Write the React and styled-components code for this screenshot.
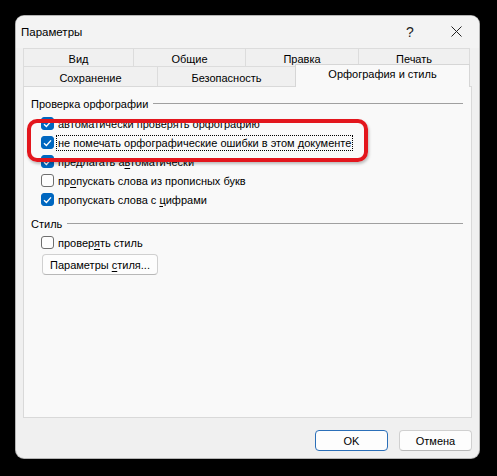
import React from "react";
import styled, { createGlobalStyle } from "styled-components";

const Global = createGlobalStyle`
  html, body {
    margin: 0;
    padding: 0;
    background: #000;
    width: 497px;
    height: 476px;
    overflow: hidden;
  }
  * { box-sizing: border-box; }
`;

const Dialog = styled.div`
  margin: 16px 0 0 16px;
  width: 463px;
  height: 442px;
  background: #f0f0f0;
  border-radius: 8px;
  box-shadow: 0 0 0 1px #b4b4b4;
  font-family: "Liberation Sans", Arial, sans-serif;
  font-size: 11px;
  color: #000;
  display: flex;
  flex-direction: column;
  overflow: hidden;
`;

const TitleBar = styled.div`
  height: 32px;
  display: flex;
  align-items: center;
  padding-left: 5px;
  padding-bottom: 1px;
  background: #f3f3f3;
`;

const Title = styled.div`
  flex: 1;
  font-size: 11.5px;
`;

const TitleButton = styled.div`
  width: 46px;
  height: 32px;
  display: flex;
  align-items: center;
  justify-content: center;
  font-size: 14px;
  color: #222;
`;

const Body = styled.div`
  padding: 0 7px;
  display: flex;
  flex-direction: column;
`;

const TabRow = styled.div`
  display: flex;
  height: ${(p) => p.$h}px;
  width: 447px;
  position: relative;
`;

const Tab = styled.div`
  width: ${(p) => p.$w}px;
  display: flex;
  align-items: center;
  justify-content: center;
  background: #f0f0f0;
  border: 1px solid #dcdcdc;
  border-bottom: none;
  margin-right: -1px;
  padding-top: ${(p) => p.$pt || 0}px;
`;

const ActiveTab = styled.div`
  width: ${(p) => p.$w}px;
  height: 23px;
  margin-top: -2px;
  display: flex;
  align-items: flex-start;
  justify-content: center;
  padding-top: 3px;
  background: #f9f9f9;
  border: 1px solid #d6d6d6;
  border-bottom: none;
  position: relative;
  z-index: 2;
`;

const Panel = styled.div`
  width: 449px;
  height: 332px;
  background: #f9f9f9;
  border: 1px solid #d9d9d9;
  position: relative;
  padding: 8px 8px 0 7px;
`;

const GroupHead = styled.div`
  display: flex;
  align-items: center;
  height: 17px;
  gap: 5px;
  margin-top: ${(p) => p.$mt || 0}px;
  &::after {
    content: "";
    flex: 1;
    height: 1px;
    background: #a0a0a0;
  }
`;

const Options = styled.div`
  display: flex;
  flex-direction: column;
  padding-left: 10px;
  margin-top: ${(p) => p.$mt || 0}px;
`;

const Row = styled.label`
  display: flex;
  align-items: center;
  height: 19px;
  gap: 3px;
`;

const Box = styled.span`
  width: 13px;
  height: 13px;
  border-radius: 3px;
  flex: none;
  display: flex;
  align-items: center;
  justify-content: center;
  background: ${(p) => (p.$on ? "#0067c0" : "#fdfdfd")};
  border: 1px solid ${(p) => (p.$on ? "#0067c0" : "#6e6e6e")};
`;

const Label = styled.span`
  padding: 0 1px;
  line-height: 14px;
  outline: ${(p) => (p.$focus ? "1px dotted #000" : "none")};
  outline-offset: 0;
  u { text-underline-offset: 2px; }
`;

const Button = styled.div`
  height: 21px;
  width: ${(p) => p.$w}px;
  display: flex;
  align-items: center;
  justify-content: center;
  background: #fdfdfd;
  border: 1px solid ${(p) => (p.$primary ? "#2b6fb8" : "#d0d0d0")};
  border-bottom-color: ${(p) => (p.$primary ? "#2b6fb8" : "#b8b8b8")};
  border-radius: 4px;
  u { text-underline-offset: 2px; }
`;

const StyleButton = styled(Button)`
  margin: 2px 0 0 1px;
`;

const Footer = styled.div`
  display: flex;
  justify-content: flex-end;
  gap: 11px;
  padding: 12px 0 0 0;
`;

const Highlight = styled.div`
  position: absolute;
  left: 3px;
  top: 32px;
  width: 341px;
  height: 43px;
  border: 4px solid #e3161d;
  border-radius: 10px;
  box-shadow: 1px 2px 3px rgba(0, 0, 0, 0.25);
  pointer-events: none;
`;

const Check = () => (
  <svg width="9" height="8" viewBox="0 0 9 8">
    <path d="M1 4.2 L3.4 6.4 L8 1.4" fill="none" stroke="#fff" strokeWidth="1.4" />
  </svg>
);

const Option = ({ on, focus, children }) => (
  <Row>
    <Box $on={on}>{on && <Check />}</Box>
    <Label $focus={focus}>{children}</Label>
  </Row>
);

export default function App() {
  return (
    <>
      <Global />
      <Dialog>
        <TitleBar>
          <Title>Параметры</Title>
          <TitleButton>?</TitleButton>
          <TitleButton>
            <svg width="11" height="11" viewBox="0 0 11 11">
              <path d="M0.5 0.5 L10.5 10.5 M10.5 0.5 L0.5 10.5" stroke="#222" strokeWidth="1" />
            </svg>
          </TitleButton>
        </TitleBar>
        <Body>
          <TabRow $h={18}>
            <Tab $w={111} $pt={2}>Вид</Tab>
            <Tab $w={113} $pt={2}>Общие</Tab>
            <Tab $w={114} $pt={2}>Правка</Tab>
            <Tab $w={112} $pt={2}>Печать</Tab>
          </TabRow>
          <TabRow $h={20}>
            <Tab $w={135} $pt={3}>Сохранение</Tab>
            <Tab $w={139} $pt={3}>Безопасность</Tab>
            <ActiveTab $w={175}>Орфография и стиль</ActiveTab>
          </TabRow>
          <Panel>
            <GroupHead>Проверка орфографии</GroupHead>
            <Options $mt={2}>
              <Option on>автоматически проверять орфографию</Option>
              <Option on focus>не помечать орфографические ошибки в этом документе</Option>
              <Option on>предлагать а<u>в</u>томатически</Option>
              <Option>пр<u>о</u>пускать слова из прописных букв</Option>
              <Option on>пропускать слова с <u>ц</u>ифрами</Option>
            </Options>
            <GroupHead $mt={6}>Стиль</GroupHead>
            <Options $mt={1}>
              <Option>провер<u>я</u>ть стиль</Option>
              <StyleButton $w={116}>
                <span>Параметры <u>с</u>тиля...</span>
              </StyleButton>
            </Options>
            <Highlight />
          </Panel>
          <Footer>
            <Button $w={73} $primary>OK</Button>
            <Button $w={73}>Отмена</Button>
          </Footer>
        </Body>
      </Dialog>
    </>
  );
}
